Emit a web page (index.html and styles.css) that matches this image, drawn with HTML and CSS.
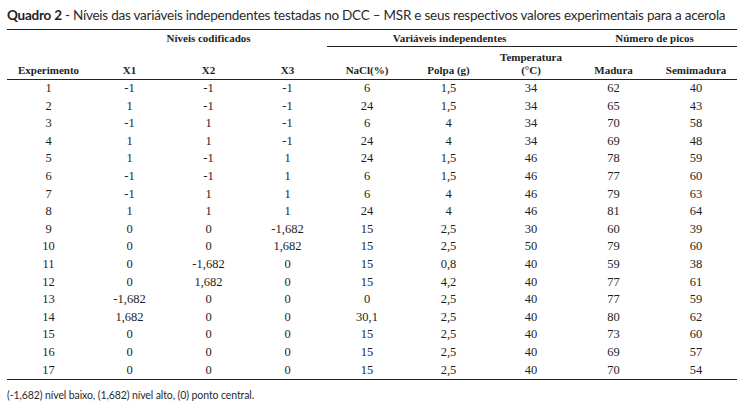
FILE: index.html
```html
<!DOCTYPE html>
<html lang="pt">
<head>
<meta charset="utf-8">
<title>Quadro 2</title>
<link rel="stylesheet" href="styles.css">
</head>
<body>
<div class="page">
  <p class="title"><b>Quadro 2</b> - Níveis das variáveis independentes testadas no DCC – MSR e seus respectivos valores experimentais para a acerola</p>
  <table class="data">
    <colgroup>
      <col class="c-exp"><col class="c-x"><col class="c-x"><col class="c-x"><col class="c-nacl"><col class="c-polpa"><col class="c-temp"><col class="c-mad"><col class="c-semi">
    </colgroup>
    <thead>
      <tr class="group">
        <th></th>
        <th colspan="3">Níveis codificados</th>
        <th colspan="3" class="ruled">Variáveis independentes</th>
        <th colspan="2" class="ruled">Número de picos</th>
      </tr>
      <tr class="heads">
        <th>Experimento</th>
        <th>X1</th>
        <th>X2</th>
        <th>X3</th>
        <th>NaCl(%)</th>
        <th>Polpa (g)</th>
        <th>Temperatura<br>(°C)</th>
        <th>Madura</th>
        <th>Semimadura</th>
      </tr>
    </thead>
    <tbody>
      <tr><td>1</td><td>-1</td><td>-1</td><td>-1</td><td>6</td><td>1,5</td><td>34</td><td>62</td><td>40</td></tr>
      <tr><td>2</td><td>1</td><td>-1</td><td>-1</td><td>24</td><td>1,5</td><td>34</td><td>65</td><td>43</td></tr>
      <tr><td>3</td><td>-1</td><td>1</td><td>-1</td><td>6</td><td>4</td><td>34</td><td>70</td><td>58</td></tr>
      <tr><td>4</td><td>1</td><td>1</td><td>-1</td><td>24</td><td>4</td><td>34</td><td>69</td><td>48</td></tr>
      <tr><td>5</td><td>1</td><td>-1</td><td>1</td><td>24</td><td>1,5</td><td>46</td><td>78</td><td>59</td></tr>
      <tr><td>6</td><td>-1</td><td>-1</td><td>1</td><td>6</td><td>1,5</td><td>46</td><td>77</td><td>60</td></tr>
      <tr><td>7</td><td>-1</td><td>1</td><td>1</td><td>6</td><td>4</td><td>46</td><td>79</td><td>63</td></tr>
      <tr><td>8</td><td>1</td><td>1</td><td>1</td><td>24</td><td>4</td><td>46</td><td>81</td><td>64</td></tr>
      <tr><td>9</td><td>0</td><td>0</td><td>-1,682</td><td>15</td><td>2,5</td><td>30</td><td>60</td><td>39</td></tr>
      <tr><td>10</td><td>0</td><td>0</td><td>1,682</td><td>15</td><td>2,5</td><td>50</td><td>79</td><td>60</td></tr>
      <tr><td>11</td><td>0</td><td>-1,682</td><td>0</td><td>15</td><td>0,8</td><td>40</td><td>59</td><td>38</td></tr>
      <tr><td>12</td><td>0</td><td>1,682</td><td>0</td><td>15</td><td>4,2</td><td>40</td><td>77</td><td>61</td></tr>
      <tr><td>13</td><td>-1,682</td><td>0</td><td>0</td><td>0</td><td>2,5</td><td>40</td><td>77</td><td>59</td></tr>
      <tr><td>14</td><td>1,682</td><td>0</td><td>0</td><td>30,1</td><td>2,5</td><td>40</td><td>80</td><td>62</td></tr>
      <tr><td>15</td><td>0</td><td>0</td><td>0</td><td>15</td><td>2,5</td><td>40</td><td>73</td><td>60</td></tr>
      <tr><td>16</td><td>0</td><td>0</td><td>0</td><td>15</td><td>2,5</td><td>40</td><td>69</td><td>57</td></tr>
      <tr><td>17</td><td>0</td><td>0</td><td>0</td><td>15</td><td>2,5</td><td>40</td><td>70</td><td>54</td></tr>
    </tbody>
  </table>
  <p class="note">(-1,682) nível baixo, (1,682) nível alto, (0) ponto central.</p>
</div>
</body>
</html>
```

FILE: styles.css
```css
html, body {
  margin: 0;
  padding: 0;
  background: #ffffff;
}

.page {
  padding: 5px 0 0 7px;
  width: 730px;
}

.title {
  margin: 0;
  height: 24px;
  font-family: Lato, "Open Sans", sans-serif;
  font-size: 13.5px;
  letter-spacing: -0.24px;
  line-height: 20px;
  color: #2a2a2a;
  white-space: nowrap;
}

.title b {
  font-weight: 700;
  color: #222;
}

.data {
  width: 730px;
  border-collapse: collapse;
  table-layout: fixed;
  font-family: "Liberation Serif", serif;
  color: #1e1e1e;
  border-top: 1px solid #222;
  border-bottom: 1px solid #222;
}

.c-exp { width: 83px; }
.c-x { width: 79px; }
.c-nacl { width: 80px; }
.c-polpa { width: 83px; }
.c-temp { width: 82px; }
.c-mad { width: 83px; }
.c-semi { width: 82px; }

.data th {
  font-weight: 700;
  font-size: 11px;
  text-align: center;
  padding: 0;
}

.group th {
  height: 16px;
  line-height: 16px;
  vertical-align: middle;
}

.group th.ruled {
  border-bottom: 1px solid #222;
}

.heads th {
  height: 30px;
  line-height: 13px;
  vertical-align: bottom;
  padding-bottom: 2px;
  border-bottom: 1px solid #222;
}

.data td {
  font-size: 12.5px;
  height: 17.6px;
  line-height: 17.6px;
  padding: 0;
  text-align: center;
}

.note {
  margin: 8px 0 0;
  font-family: Lato, "Open Sans", sans-serif;
  font-size: 10.5px;
  letter-spacing: -0.1px;
  line-height: 14px;
  color: #2a2a2a;
}
```
